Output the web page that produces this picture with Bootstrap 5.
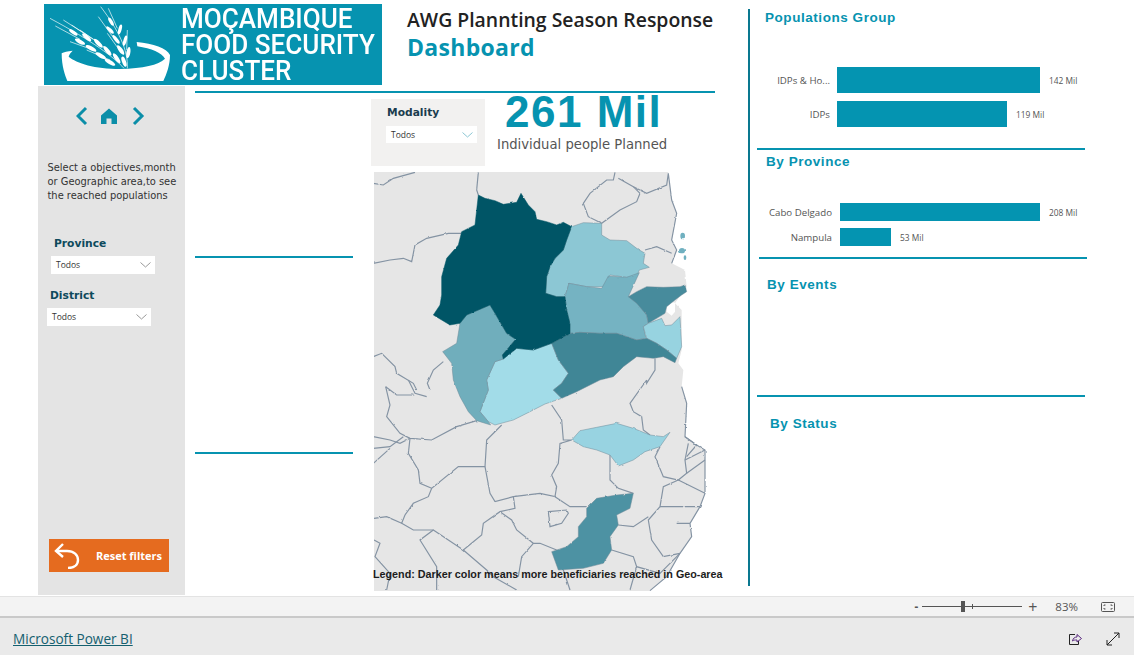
<!DOCTYPE html>
<html lang="pt">
<head>
<meta charset="UTF-8">
<title>AWG Plannting Season Response</title>
<link href="https://cdn.jsdelivr.net/npm/bootstrap@5.3.0/dist/css/bootstrap.min.css" rel="stylesheet">
<style>
body { margin: 0; overflow: hidden; background: #fff; font-family: "Open Sans", sans-serif; }
.report-page { height: 596px; background: #fff; }
.left-zone { width: 748px; flex: none; }
.top-head { height: 86px; }
.logo-band { width: 338px; height: 81px; margin: 4px 0 0 44px; background: #0693b0; flex: none; position: relative; }
.logo-band svg { display: block; }
.logo-words { position: absolute; left: 137px; top: 2px; color: #fff; font: 500 28.5px/26px Roboto, sans-serif; transform: scaleX(.915); transform-origin: left top; white-space: nowrap; }
.title-block { margin: 7px 0 0 25px; }
.title-main { font: 600 19.4px/26px "Open Sans", sans-serif; color: #222; white-space: nowrap; }
.title-sub { font: 700 23px/28px "Open Sans", sans-serif; color: #0693b0; letter-spacing: .3px; }
.side-panel { width: 147px; height: 509px; margin-left: 38px; background: #e4e4e4; flex: none; position: relative; }
.side-nav { padding: 16px 0 0 38px; height: 75px; }
.side-hint { font: 400 9.9px/14.2px "DejaVu Sans", sans-serif; color: #333; margin: 0 0 0 9.5px; white-space: nowrap; }
.slicer-label { font: 700 10.7px/14px "DejaVu Sans", sans-serif; color: #0e4a5c; }
.slicer-box { height: 18px; background: #fff; display: flex; align-items: center; justify-content: space-between; padding: 0 4px 0 5px; font: 400 8.5px/18px "Open Sans", sans-serif; color: #333; }
.prov-slicer { margin: 33px 0 0 13px; width: 104px; }
.prov-slicer .slicer-label { margin: 0 0 5px 3px; }
.dist-slicer { margin: 15px 0 0 9px; width: 104px; }
.dist-slicer .slicer-label { margin: 0 0 5px 3px; }
.reset-btn { position: absolute; left: 11px; top: 453px; width: 120px; height: 33px; background: #e56b1f; border: 0; border-radius: 0; padding: 0 7px 0 5px; color: #fff; font: 700 11px/33px "Open Sans", sans-serif; }
.mid-zone { width: 520px; margin-left: 10px; flex: none; }
.teal-rule { border-top: 2px solid #0693b0; }
.mid-top-rule { margin-top: 5px; }
.rule-col { width: 158px; flex: none; }
.rule-one { margin-top: 163px; }
.rule-two { margin-top: 194px; }
.map-col { width: 352px; margin-left: 18px; flex: none; position: relative; }
.kpi-row { height: 73px; margin-top: 6px; }
.modality-box { width: 114px; height: 67px; background: #f2f1f0; padding: 7px 8px 0 16px; flex: none; }
.modality-box .slicer-label { color: #1a3c4e; margin-bottom: 6px; }
.modality-box .slicer-box { margin-left: -1px; height: 17px; }
.kpi-col { margin-left: 12px; margin-top: -6px; }
.kpi-num { font: 700 44px/38px "Liberation Sans", sans-serif; color: #0693b0; letter-spacing: 1.5px; margin-left: 8px; white-space: nowrap; }
.kpi-cap { font: 400 13.2px/18px "DejaVu Sans", sans-serif; color: #555; margin-top: 5px; white-space: nowrap; }
.geo-map { display: block; margin-left: 3px; }
.map-legend { position: absolute; left: 2px; top: 474px; font: 700 10.75px/14px "Liberation Sans", sans-serif; color: #1c1c1c; white-space: nowrap; }
.right-zone { width: 340px; height: 577px; margin-top: 9px; border-left: 2px solid #0a7890; flex: none; }
.pane-title { font: 700 13.5px/16px "Liberation Sans", sans-serif; color: #0693b0; letter-spacing: .55px; white-space: nowrap; }
.pane-rule { border-top: 2px solid #0693b0; width: 328px; margin-left: 7px; }
.chart-row { display: flex; align-items: center; }
.chart-label { text-align: right; font: 400 9.7px/12px "Open Sans", sans-serif; color: #555; flex: none; white-space: nowrap; padding-top: 2px; }
.chart-bar { background: #0494b1; flex: none; }
.chart-val { font: 400 8.4px/12px "Open Sans", sans-serif; color: #555; margin-left: 9px; white-space: nowrap; padding-top: 2px; }
.pop-pane { height: 139px; padding: 1px 0 0 15px; }
.pop-pane .chart-list { margin: 41px 0 0 -4px; }
.pop-pane .chart-label { width: 69px; margin-right: 7px; }
.pop-pane .chart-bar { height: 26px; }
.pop-pane .chart-row + .chart-row { margin-top: 8px; }
.prov-pane { height: 107px; padding: 4px 0 0 16px; }
.prov-pane .chart-list { margin: 33px 0 0 -7px; }
.prov-pane .chart-label { width: 73px; margin-right: 8px; }
.prov-pane .chart-bar { height: 18px; }
.prov-pane .chart-row + .chart-row { margin-top: 7px; }
.events-rule { margin-left: 9px; }
.events-title { margin: 18px 0 0 17px; }
.status-rule { margin-top: 102px; }
.status-title { margin: 19px 0 0 20px; }
.status-strip { height: 22px; background: #f3f3f3; border-top: 1px solid #e3e3e3; border-bottom: 2px solid #c9c9c9; padding-right: 19px; font: 400 11.5px/19px "Open Sans", sans-serif; color: #555; }
.zoom-minus { font-weight: 700; }
.zoom-track { width: 100px; height: 1px; background: #555; position: relative; margin: 0 6px 0 4px; }
.zoom-thumb { position: absolute; left: 39px; top: -5px; width: 4px; height: 11px; background: #555; }
.zoom-tick { position: absolute; left: 50px; top: -2px; width: 1px; height: 5px; background: #555; }
.zoom-pct { margin: 0 23px 0 18px; }
.foot-strip { height: 37px; background: #eaeaea; padding: 4px 14px 0 13px; }
.foot-link { font: 400 13.6px/33px "Open Sans", sans-serif; color: #14606f; text-decoration: underline; }
</style>
</head>
<body>
<div class="report-page d-flex">
  <div class="left-zone">
    <div class="top-head d-flex">
      <div class="logo-band">
        <svg width="338" height="81" viewBox="42 12 1014 243">
          <path fill="#fff" d="M95 160C95 200 105 225 112 243H400C410 222 420 195 420 165C410 145 370 130 320 126L322 139C365 146 395 158 405 176C385 195 340 205 270 207C195 207 140 190 116 170C118 162 122 158 128 152C112 154 102 156 95 160Z"/>
          <g stroke="#fff" stroke-width="2" fill="none">
            <path d="M282 205C250 170 190 125 60 55"/>
            <path d="M76 78L150 118M100 60L170 105M120 125L190 150M150 90L215 135M125 75L190 118M170 150L240 180"/>
            <path d="M292 205C295 150 265 90 212 20"/>
            <path d="M235 25L262 85M205 50L248 110M232 100L268 150M292 90L290 150"/>
          </g>
          <g fill="#fff">
            <ellipse cx="130" cy="97" rx="15" ry="5" transform="rotate(35 130 97)"/>
            <ellipse cx="150" cy="125" rx="17" ry="6" transform="rotate(28 150 125)"/>
            <ellipse cx="170" cy="112" rx="17" ry="6" transform="rotate(40 170 112)"/>
            <ellipse cx="183" cy="145" rx="18" ry="6" transform="rotate(28 183 145)"/>
            <ellipse cx="205" cy="130" rx="18" ry="6" transform="rotate(45 205 130)"/>
            <ellipse cx="212" cy="167" rx="18" ry="6" transform="rotate(30 212 167)"/>
            <ellipse cx="232" cy="152" rx="18" ry="6" transform="rotate(50 232 152)"/>
            <ellipse cx="240" cy="187" rx="18" ry="6" transform="rotate(30 240 187)"/>
            <ellipse cx="260" cy="175" rx="18" ry="6" transform="rotate(55 260 175)"/>
            <ellipse cx="243" cy="65" rx="14" ry="5" transform="rotate(60 243 65)"/>
            <ellipse cx="240" cy="90" rx="15" ry="5" transform="rotate(45 240 90)"/>
            <ellipse cx="270" cy="88" rx="15" ry="5" transform="rotate(105 270 88)"/>
            <ellipse cx="258" cy="118" rx="16" ry="5" transform="rotate(50 258 118)"/>
            <ellipse cx="285" cy="122" rx="16" ry="5" transform="rotate(105 285 122)"/>
            <ellipse cx="272" cy="150" rx="17" ry="6" transform="rotate(55 272 150)"/>
            <ellipse cx="295" cy="158" rx="17" ry="6" transform="rotate(100 295 158)"/>
            <ellipse cx="282" cy="185" rx="16" ry="6" transform="rotate(70 282 185)"/>
          </g>
        </svg>
        <div class="logo-words">MOÇAMBIQUE<br>FOOD SECURITY<br>CLUSTER</div>
      </div>
      <div class="title-block">
        <div class="title-main">AWG Plannting Season Response</div>
        <div class="title-sub">Dashboard</div>
      </div>
    </div>
    <div class="d-flex">
      <div class="side-panel">
        <div class="side-nav">
          <svg width="70" height="20" viewBox="0 0 70 20" fill="none" stroke="#0b8ea8" stroke-width="3">
            <path d="M10 2L2 10L10 18"/>
            <path d="M25 18V9.5L33 2.5L41 9.5V18H35.5V12.5H30.500V18Z" fill="#0b8ea8" stroke-width="0"/>
            <path d="M58 2L66 10L58 18"/>
          </svg>
        </div>
        <p class="side-hint">Select a objectives,month<br>or Geographic area,to see<br>the reached populations</p>
        <div class="prov-slicer">
          <div class="slicer-label">Province</div>
          <div class="slicer-box"><span>Todos</span>
            <svg width="11" height="6" viewBox="0 0 11 6" fill="none" stroke="#999"><path d="M.5 .5L5.500 5L10.500 .5"/></svg>
          </div>
        </div>
        <div class="dist-slicer">
          <div class="slicer-label">District</div>
          <div class="slicer-box"><span>Todos</span>
            <svg width="11" height="6" viewBox="0 0 11 6" fill="none" stroke="#999"><path d="M.5 .5L5.500 5L10.500 .5"/></svg>
          </div>
        </div>
        <button type="button" class="btn reset-btn d-flex align-items-center justify-content-between">
          <svg width="26" height="27" viewBox="0 0 26 27" fill="none" stroke="#fff" stroke-width="2.400">
            <path d="M9 2L2 9L9 15"/>
            <path d="M2 9H13C20 9 24 13 24 18C24 23 20 26 14 26"/>
          </svg>
          <span>Reset filters</span>
        </button>
      </div>
      <div class="mid-zone">
        <div class="teal-rule mid-top-rule"></div>
        <div class="d-flex">
          <div class="rule-col">
            <div class="teal-rule rule-one"></div>
            <div class="teal-rule rule-two"></div>
          </div>
          <div class="map-col">
            <div class="kpi-row d-flex">
              <div class="modality-box">
                <div class="slicer-label">Modality</div>
                <div class="slicer-box"><span>Todos</span>
                  <svg width="11" height="6" viewBox="0 0 11 6" fill="none" stroke="#8cc7d4"><path d="M.5 .5L5.500 5L10.500 .5"/></svg>
                </div>
              </div>
              <div class="kpi-col">
                <div class="kpi-num">261 Mil</div>
                <div class="kpi-cap">Individual people Planned</div>
              </div>
            </div>
            <svg class="geo-map" width="349" height="419" viewBox="374 172 349 419">
              <defs>
                <filter id="rough" filterUnits="userSpaceOnUse" x="-60" y="-60" width="1200" height="1420">
                  <feTurbulence type="fractalNoise" baseFrequency=".06" numOctaves="2" seed="4"/>
                  <feDisplacementMap in="SourceGraphic" scale="6" xChannelSelector="R" yChannelSelector="G"/>
                  <feGaussianBlur stdDeviation=".7"/>
                </filter>
              </defs>
              <g transform="translate(370 170) scale(.33333)" filter="url(#rough)">
                <path fill="#e6e6e6" d="M-40-40H895L895 10L905 90L920 130L905 210L920 240L905 280L945 300L950 350L915 400L935 420L935 540L925 580L940 600L935 650L950 700L945 800L980 825L1005 840L1005 970L990 1010L960 1060L965 1100L930 1150L890 1220L840 1262L840 1300H-40Z"/>
                <path fill="#fff" d="M890 410L900 395L915 398L915 425L905 437L890 425Z"/>
                <g fill="#6fb0c0">
                  <ellipse cx="938" cy="198" rx="7" ry="10"/>
                  <ellipse cx="936" cy="242" rx="9" ry="8"/>
                  <ellipse cx="945" cy="263" rx="4" ry="7"/>
                </g>
                <g fill="none" stroke="#8493a3" stroke-width="3.500">
                  <path d="M10 40L40 45L70 25L135 7"/>
                  <path d="M325 7L320 60L325 75"/>
                  <path d="M10 280L60 270L100 265L125 275L135 225L170 205L235 190L275 190"/>
                  <path d="M10 560L35 550L75 590L80 610L130 640L140 660"/>
                  <path d="M220 575L190 600L172 640L180 660"/>
                  <path d="M735 7L730 30L710 30L660 70L640 100L655 140L695 160L750 120L800 95L810 70L790 50L745 25"/>
                  <path d="M790 50L830 70L890 45L895 10L905 90L920 130L905 210L920 240L905 280"/>
                  <path d="M825 240L860 230L905 250"/>
                  <path d="M855 565L855 600L830 640L830 630"/>
                  <path d="M47 650L60 705L50 740L90 790L120 805L185 810L260 770L320 752"/>
                  <path d="M115 630L135 670L170 680"/>
                  <path d="M47 650L80 675L130 675"/>
                  <path d="M10 800L60 810L90 820L120 805"/>
                  <path d="M10 835L60 830L100 800"/>
                  <path d="M120 805L115 850L145 900L150 940L185 955"/>
                  <path d="M10 880L60 835"/>
                  <path d="M395 765L350 810L345 890L300 890L265 890L185 955L175 980L130 1000L105 1035L95 1060L50 1040L12 1045"/>
                  <path d="M545 705L575 750L580 810L605 810L570 820L565 880L545 915L560 950L555 980L510 970L430 980L375 995L360 970L345 890"/>
                  <path d="M555 980L600 1010L650 1010"/>
                  <path d="M430 980L435 1015L390 1025L340 1060L335 1095L280 1140L235 1110L190 1080L150 1110L200 1190L200 1260"/>
                  <path d="M95 1060L130 1080L190 1080"/>
                  <path d="M390 1025L425 1050L440 1080L490 1120L510 1120L560 1140"/>
                  <path d="M490 1120L455 1160L445 1220"/>
                  <path d="M280 1140L350 1200L370 1220L440 1260"/>
                  <path d="M535 1025L590 1020L595 1030L575 1060L540 1070Z"/>
                  <path d="M720 855L720 930L745 955L790 970"/>
                  <path d="M870 830L855 860L880 920L925 930L950 910L945 870L955 820"/>
                  <path d="M925 930L880 950L870 1010L835 1050L845 1110L880 1160L930 1150"/>
                  <path d="M745 1065L790 1070L835 1040"/>
                  <path d="M725 1140L790 1160L800 1190L870 1210L930 1150"/>
                  <path d="M830 630L780 700L790 725L815 740L820 780L840 795"/>
                  <path d="M945 800L980 825L950 860"/>
                  <path d="M12 1110L30 1120L15 1160L60 1210L50 1260"/>
                  <path d="M560 1140L600 1260"/>
                  <path d="M800 1190L780 1260"/>
                  <path d="M950 910L1005 870M945 870L1005 840"/>
                  <path d="M925 930L1005 970M870 1010L990 1010M920 1060L960 1060"/>
                  <path d="M935 650L950 700L945 800L980 825L1005 840L1005 970L990 1010L960 1060L965 1100L930 1150L890 1220L840 1262"/>
                </g>
                <g stroke="#6f8a98" stroke-width="1.500">
                  <path fill="#8cc7d4" d="M605 170L640 158L695 160L695 195L720 210L770 212L800 235L825 250L820 280L838 292L808 300L800 320L770 322L720 315L700 350L650 350L597 340L585 380L560 380L527 370L530 320L540 290L555 265L580 240L590 210Z"/>
                  <path fill="#74b3c2" d="M597 340L650 350L695 355L715 318L770 322L808 308L775 380L800 395L830 435L835 460L820 470L828 505L800 510L740 490L690 490L630 487L600 490L600 460L590 420L585 380Z"/>
                  <path fill="#468b9c" d="M775 380L800 365L830 350L880 352L930 350L945 345L950 365L935 375L915 390L890 410L885 430L835 460L830 435L800 400Z"/>
                  <path fill="#97d3e0" d="M835 460L875 445L885 467L905 465L930 440L935 530L920 565L890 540L860 520L830 505L820 470Z"/>
                  <path fill="#a2dce8" d="M400 567L440 535L490 540L545 520L565 570L595 610L575 640L550 660L575 685L525 702L480 725L430 750L375 765L355 755L330 725L355 660L350 630L375 575Z"/>
                  <path fill="#3f8696" d="M545 520L600 490L630 487L690 490L740 490L800 510L830 505L860 520L890 540L920 565L915 578L880 560L850 565L800 560L760 590L730 620L690 630L620 665L575 685L550 660L575 640L595 610L565 570Z"/>
                  <path fill="#6faebc" d="M360 405L375 430L410 490L437 508L397 555L400 567L375 575L350 630L355 660L330 725L355 755L362 765L320 752L295 725L270 680L250 630L245 580L218 545L260 520L270 460L290 435L325 420Z"/>
                  <path fill="#98d3e1" d="M605 810L630 782L680 772L740 760L790 775L840 795L880 800L900 787L870 830L825 845L790 870L745 888L720 855L680 840L640 830Z"/>
                  <path fill="#4d92a3" d="M790 970L780 1015L740 1035L745 1065L720 1100L725 1140L700 1180L640 1195L565 1200L545 1145L590 1130L625 1100L625 1070L650 1040L650 1015L680 985L740 975Z"/>
                  <path fill="#005566" stroke="#005566" d="M325 75L345 85L375 92L400 103L440 97L453 70L475 105L495 125L500 148L530 155L560 165L580 157L605 170L590 210L580 240L555 265L540 290L530 320L527 370L560 380L585 380L590 420L600 460L600 490L545 520L490 540L440 535L400 567L397 555L437 508L410 490L375 430L360 405L325 420L290 435L270 460L240 465L190 435L210 405L215 375L215 320L230 265L265 225L275 185L315 165Z"/>
                </g>
              </g>
            </svg>
            <div class="map-legend">Legend: Darker color means more beneficiaries reached in Geo-area</div>
          </div>
        </div>
      </div>
    </div>
  </div>
  <div class="right-zone">
    <div class="pop-pane">
      <div class="pane-title">Populations Group</div>
      <div class="chart-list">
        <div class="chart-row"><div class="chart-label">IDPs &amp; Ho...</div><div class="chart-bar" style="width:203px"></div><div class="chart-val">142 Mil</div></div>
        <div class="chart-row"><div class="chart-label">IDPs</div><div class="chart-bar" style="width:170px"></div><div class="chart-val">119 Mil</div></div>
      </div>
    </div>
    <div class="pane-rule"></div>
    <div class="prov-pane">
      <div class="pane-title">By Province</div>
      <div class="chart-list">
        <div class="chart-row"><div class="chart-label">Cabo Delgado</div><div class="chart-bar" style="width:200px"></div><div class="chart-val">208 Mil</div></div>
        <div class="chart-row"><div class="chart-label">Nampula</div><div class="chart-bar" style="width:51px"></div><div class="chart-val">53 Mil</div></div>
      </div>
    </div>
    <div class="pane-rule events-rule"></div>
    <div class="pane-title events-title">By Events</div>
    <div class="pane-rule status-rule"></div>
    <div class="pane-title status-title">By Status</div>
  </div>
</div>
<div class="status-strip d-flex align-items-center justify-content-end">
  <span class="zoom-minus">-</span>
  <div class="zoom-track"><div class="zoom-thumb"></div><div class="zoom-tick"></div></div>
  <span class="fs-6 lh-1">+</span>
  <span class="zoom-pct">83%</span>
  <svg width="14" height="10" viewBox="0 0 14 10" fill="none" stroke="#555"><rect x=".5" y=".5" width="13" height="9" rx="1"/><path d="M3 4V3H4.500M11 4V3H9.500M3 6V7H4.500M11 6V7H9.500"/></svg>
</div>
<div class="foot-strip d-flex align-items-center justify-content-between">
  <a href="#" class="foot-link">Microsoft Power BI</a>
  <div class="d-flex align-items-center gap-4">
    <svg width="14" height="14" viewBox="0 0 14 14" fill="none" stroke="#222"><path d="M7 2.500H1.500V12.500H10.500V9"/><path d="M4.500 9C5 6 7 5 9 5V2.500L13.500 6.500L9 10V8C7 8 5.500 8 4.500 9Z" stroke="#5a2a80"/></svg>
    <svg width="14" height="14" viewBox="0 0 14 14" fill="none" stroke="#222"><path d="M1 13L13 1M8 1H13V6M1 8V13H6"/></svg>
  </div>
</div>
<script src="https://cdn.jsdelivr.net/npm/bootstrap@5.3.0/dist/js/bootstrap.bundle.min.js"></script>
</body>
</html>
